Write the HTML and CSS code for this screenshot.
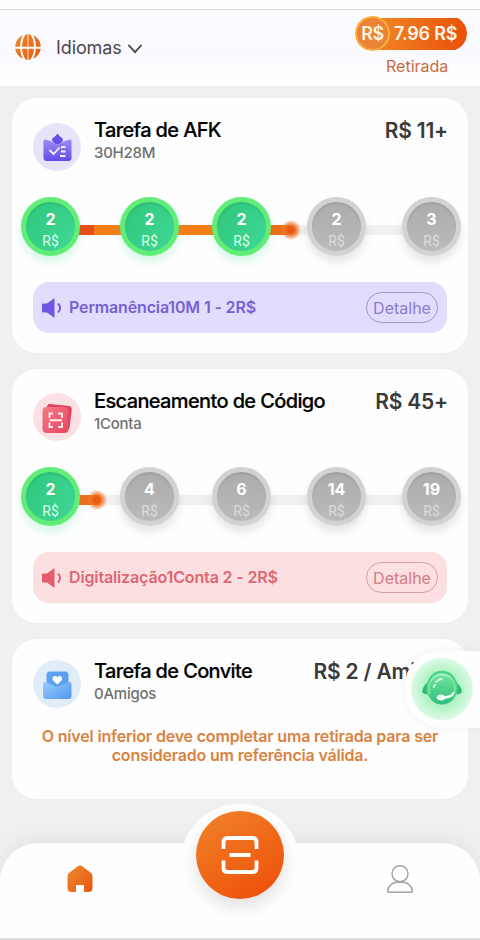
FILE: index.html
```html
<!DOCTYPE html>
<html lang="pt-BR">

<head>
    <meta charset="UTF-8">
    <meta name="viewport" content="width=device-width, initial-scale=1.0">
    <title>Tarefas</title>
    <link rel="stylesheet" href="styles.css">
</head>

<body>
    <header class="header">
        <div class="language">
            <svg class="globe" viewBox="0 0 26 26">
                <defs>
                    <linearGradient id="orange" x1="0" y1="0" x2="1" y2="1">
                        <stop offset="0" stop-color="#ed8a2b" />
                        <stop offset="1" stop-color="#e85713" />
                    </linearGradient>
                </defs>
                <circle cx="13" cy="13" r="12.8" fill="url(#orange)" />
                <path d="M9.800 0C4.800 7 4.800 19 9.800 26M16.200 0c5 7 5 19 0 26M0 13.700h26" fill="none" stroke="#fff" stroke-width="1.900" />
                <path d="M13 0v26" stroke="#fbe3cf" stroke-width="1" />
            </svg>
            <span>Idiomas</span>
            <svg class="chevron" viewBox="0 0 14 10">
                <path d="M1 1.500l6 6.700 6-6.700" fill="none" stroke="#454148" stroke-width="1.800" stroke-linecap="round" />
            </svg>
        </div>
        <div class="wallet">
            <div class="balance">
                <span class="balance-coin">R$</span>
                <span class="balance-value">7.96 R$</span>
            </div>
            <a class="withdraw">Retirada</a>
        </div>
    </header>

    <main class="content">
        <!-- AFK task -->
        <section class="card card-afk">
            <div class="card-head">
                <svg class="card-icon" viewBox="0 0 48 48">
                    <defs>
                        <linearGradient id="purple" x1="0" y1="0" x2="0" y2="1">
                            <stop offset="0" stop-color="#9a8df5" />
                            <stop offset="1" stop-color="#6549e8" />
                        </linearGradient>
                    </defs>
                    <circle cx="24" cy="24" r="24" fill="#e7e3f9" />
                    <path d="M10.500 18q0-2 2-1.500l6 2q2.500 3 6 3t6-3l6-2q2-.5 2 1.500v17q0 3-3 3h-22q-3 0-3-3z" fill="url(#purple)" />
                    <path d="M24.500 10.500q1.500 2.500 4.500 4.500 2 1.500 0 4-2 2.500-4.500 2.500t-4.500-2.500q-2-2.500 0-4 3-2 4.500-4.500z" fill="#6650e5" />
                    <path d="M16.500 27l4 4 6-6.500M28 24h4.500M28 28.500h4.500M27 33h5.500" fill="none" stroke="#f3f0ff" stroke-width="1.800" />
                </svg>
                <div class="card-title">
                    <h2>Tarefa de AFK</h2>
                    <p>30H28M</p>
                </div>
                <div class="reward">R$ 11+</div>
            </div>
            <div class="steps">
                <div class="coin done"><b>2</b><span>R$</span></div>
                <i class="line full first"></i>
                <div class="coin done"><b>2</b><span>R$</span></div>
                <i class="line full"></i>
                <div class="coin done"><b>2</b><span>R$</span></div>
                <i class="line partial"></i>
                <div class="coin"><b>2</b><span>R$</span></div>
                <i class="line"></i>
                <div class="coin"><b>3</b><span>R$</span></div>
            </div>
            <div class="notice">
                <svg class="speaker" viewBox="0 0 22 22">
                    <path d="M0 7.500q0-1 1-1h4L12.500 1v20L5 15.500H1q-1 0-1-1z" fill="currentColor" />
                    <path d="M16 6.500q4.200 4.500 0 9" fill="none" stroke="currentColor" stroke-width="1.900" />
                </svg>
                <span class="notice-text">Permanência10M 1 - 2R$</span>
                <button class="detail">Detalhe</button>
            </div>
        </section>

        <!-- QR scan task -->
        <section class="card card-scan">
            <div class="card-head">
                <svg class="card-icon" viewBox="0 0 48 48">
                    <defs>
                        <linearGradient id="red" x1="0" y1="0" x2="1" y2="1">
                            <stop offset="0" stop-color="#f27a88" />
                            <stop offset="1" stop-color="#e84660" />
                        </linearGradient>
                    </defs>
                    <circle cx="24" cy="24" r="24" fill="#fbe1e3" />
                    <path d="M17 11l19 2q3 .5 2.700 3.500l-2 17q-.5 4-4 4l-19-22q.3-5 3.300-4.500z" fill="#df3f59" />
                    <rect x="9.500" y="14" width="26" height="26" rx="4" fill="url(#red)" />
                    <path d="M20 20.500h-3.500v4.500M25 20.500h4v4.500M20 34h-3.500v-4.500M25 34h4v-4.500M16.500 27.300h12.500" fill="none" stroke="#ffe9ea" stroke-width="1.900" />
                </svg>
                <div class="card-title">
                    <h2>Escaneamento de Código</h2>
                    <p>1Conta</p>
                </div>
                <div class="reward">R$ 45+</div>
            </div>
            <div class="steps">
                <div class="coin done"><b>2</b><span>R$</span></div>
                <i class="line partial"></i>
                <div class="coin"><b>4</b><span>R$</span></div>
                <i class="line"></i>
                <div class="coin"><b>6</b><span>R$</span></div>
                <i class="line"></i>
                <div class="coin"><b>14</b><span>R$</span></div>
                <i class="line"></i>
                <div class="coin"><b>19</b><span>R$</span></div>
            </div>
            <div class="notice">
                <svg class="speaker" viewBox="0 0 22 22">
                    <path d="M0 7.500q0-1 1-1h4L12.500 1v20L5 15.500H1q-1 0-1-1z" fill="currentColor" />
                    <path d="M16 6.500q4.200 4.500 0 9" fill="none" stroke="currentColor" stroke-width="1.900" />
                </svg>
                <span class="notice-text">Digitalização1Conta 2 - 2R$</span>
                <button class="detail">Detalhe</button>
            </div>
        </section>

        <!-- Invite task -->
        <section class="card card-invite">
            <div class="card-head">
                <svg class="card-icon" viewBox="0 0 48 48">
                    <defs>
                        <linearGradient id="blue" x1="0" y1="0" x2="1" y2="1">
                            <stop offset="0" stop-color="#9acbfb" />
                            <stop offset="1" stop-color="#4f98ee" />
                        </linearGradient>
                    </defs>
                    <circle cx="24" cy="24" r="24" fill="#e0ecf8" />
                    <rect x="13.500" y="11.500" width="22" height="24" rx="3.500" fill="#5aa2ef" />
                    <path d="M10 24q0-2.500 2.500-2l7 3q4.500 3 9.500 0l7-3q2.500-.5 2.500 2v12q0 3-3 3H13q-3 0-3-3z" fill="url(#blue)" />
                    <path d="M24.300 24.500l-4-3.800c-2.600-3.200 1.800-6.500 4-3.400 2.200-3.100 6.600.2 4 3.400z" fill="#fff" />
                </svg>
                <div class="card-title">
                    <h2>Tarefa de Convite</h2>
                    <p>0Amigos</p>
                </div>
                <div class="reward">R$ 2 / Amigo</div>
            </div>
            <p class="invite-note">O nível inferior deve completar uma retirada para ser considerado um referência válida.</p>
        </section>
    </main>

    <nav class="tabbar">
        <a class="tab">
            <svg class="tab-icon" viewBox="0 0 26 28">
                <path d="M10.800 1.300q2.200-1.600 4.400 0l8.300 6.200q2 1.500 2 4V23q0 4-4 4h-3.500q-1 0-1-1v-5q0-1-1-1H10q-1 0-1 1v5q0 1-1 1H4.500q-4 0-4-4V11.500q0-2.500 2-4z" fill="url(#orange)" />
            </svg>
        </a>
        <a class="tab">
            <svg class="tab-icon" viewBox="0 0 26 28">
                <path d="M1.500 27.300q-1 0-.8-1.300C1.500 20.500 6 17 13 17s11.500 3.500 12.300 9q.2 1.300-.8 1.300z" fill="none" stroke="#a5a5a5" stroke-width="1.500" />
                <circle cx="13" cy="8.700" r="8" fill="#fff" stroke="#a5a5a5" stroke-width="1.500" />
            </svg>
        </a>
        <div class="scan-halo"></div>
        <button class="scan">
            <svg viewBox="0 0 38 38">
                <path d="M2.500 13V6q0-4 4-4h25q4 0 4 4v7M2.500 24.500V32q0 4 4 4h25q4 0 4-4v-7.500M8.500 19h21" fill="none" stroke="#fff" stroke-width="3.800" />
            </svg>
        </button>
    </nav>

    <!-- Floating support button -->
    <div class="support">
        <svg viewBox="0 0 62 62">
            <defs>
                <radialGradient id="glow">
                    <stop offset="0" stop-color="#8aeaa8" />
                    <stop offset=".6" stop-color="#b5f3c7" />
                    <stop offset="1" stop-color="#ddfae5" />
                </radialGradient>
                <linearGradient id="green" x1="0" y1="0" x2="0" y2="1">
                    <stop offset="0" stop-color="#6fe39b" />
                    <stop offset="1" stop-color="#2fbd7d" />
                </linearGradient>
            </defs>
            <circle cx="31" cy="31" r="31" fill="url(#glow)" />
            <path d="M16 25q-4 3-5 9 2 3 7 2zM46 25q4 3 5 9-2 3-7 2z" fill="#2dbb75" />
            <circle cx="31" cy="32" r="14.500" fill="url(#green)" />
            <path d="M17.500 36c-3-11 3-22 13.500-22s17 11 13.500 22" fill="none" stroke="#4bd486" stroke-width="2.500" />
            <path d="M18.500 36c-2.500-10 2.500-19.500 12.500-19.500S46 26 43.500 34" fill="none" stroke="#a5f2bd" stroke-width="1" />
            <path d="M42.500 35q-2 4.500-11 4.500" fill="none" stroke="#effff3" stroke-width="2.400" stroke-linecap="round" />
            <ellipse cx="30" cy="39.500" rx="4.200" ry="3" fill="#effff3" />
            <path d="M25 24q3-3 6-3M23 29q0-1.500 1-2.500" fill="none" stroke="#c6f8d3" stroke-width="2" stroke-linecap="round" />
        </svg>
    </div>
</body>

</html>
```
FILE: styles.css
```css
* {
    box-sizing: border-box;
}

body {
    margin: 0;
    width: 480px;
    height: 940px;
    position: relative;
    display: flex;
    flex-direction: column;
    overflow: hidden;
    font-family: Inter, sans-serif;
    background: #f0f0f0;
    border-top: 9px solid #fdfdfd;
}

h2,
p {
    margin: 0;
}

button {
    font-family: inherit;
    padding: 0;
    cursor: pointer;
}

/* Header */
.header {
    height: 77px;
    flex: none;
    display: flex;
    justify-content: space-between;
    padding: 6px 13px 0 15px;
    border-top: 1px solid #dedede;
    background: linear-gradient(#fcfcff, #f9f9fe 55%, #fdfdff 80%, #fff);
}

.language {
    display: flex;
    align-items: center;
    height: 62px;
    font-size: 18px;
    letter-spacing: -0.1px;
    color: #4b474d;
}

.globe {
    width: 26px;
    height: 26px;
    margin-right: 15px;
}

.chevron {
    width: 14px;
    height: 10px;
    margin: 3px 0 0 6px;
}

.balance {
    display: flex;
    align-items: center;
    width: 112px;
    height: 35px;
    background: linear-gradient(100deg, #ef7f21 30%, #e94f08) right center / 110px 32px no-repeat;
    border-radius: 18px;
    clip-path: inset(0 round 17px);
}

.balance-coin {
    width: 35px;
    height: 35px;
    line-height: 32px;
    text-align: center;
    border: 2px solid #f8b23c;
    border-radius: 50%;
    background: #ec8236;
    color: #fff3df;
    font-size: 18px;
    font-weight: 600;
    letter-spacing: -0.5px;
}

.balance-value {
    margin-left: 4px;
    color: #fff6e8;
    font-size: 18px;
    font-weight: 600;
    letter-spacing: -0.2px;
    white-space: nowrap;
}

.withdraw {
    display: block;
    margin: 5px 0 0 31px;
    font-size: 16px;
    line-height: 20px;
    color: #c96a3e;
}

/* Cards */
.content {
    flex: 1;
    padding: 12px 12px 0;
}

.card {
    height: 255px;
    margin-bottom: 16px;
    padding-top: 19px;
    background: #fefefe;
    border-radius: 25px;
}

.card-scan {
    height: 254px;
}

.card-invite {
    height: 160px;
    margin: 0;
}

.card-head {
    display: flex;
    align-items: flex-start;
    height: 60px;
    padding: 0 20px 0 21px;
}

.card-icon {
    width: 48px;
    height: 48px;
    margin-top: 6px;
}

.card-scan .card-icon {
    margin-top: 5px;
}

.card-invite .card-icon {
    margin-top: 2px;
}

.card-title {
    flex: 1;
    margin-left: 13px;
    white-space: nowrap;
}

.card-title h2 {
    font-size: 20px;
    line-height: 26px;
    font-weight: 500;
    letter-spacing: -0.63px;
    color: #000;
    -webkit-text-stroke: 0.2px #000;
}

.card-title p {
    font-size: 15px;
    line-height: 20px;
    font-weight: 500;
    letter-spacing: -0.25px;
    color: #707070;
}

.reward {
    font-size: 21px;
    line-height: 27px;
    font-weight: 600;
    letter-spacing: -0.2px;
    color: #3a3a3a;
    white-space: nowrap;
}

.card-invite .reward {
    margin-right: 7px;
}

/* Progress steps */
.steps {
    display: grid;
    grid-template-columns: 59px 40px 59px 33px 59px 36px 59px 36px 59px;
    align-items: center;
    height: 60px;
    margin: 19px 0 0 9px;
}

.card-scan .steps {
    margin-top: 18px;
}

.coin {
    position: relative;
    z-index: 1;
    display: flex;
    flex-direction: column;
    align-items: center;
    height: 59px;
    padding-top: 8px;
    border: 5px solid #d2d2d2;
    border-radius: 50%;
    background: linear-gradient(#acacac, #bababa);
    box-shadow: 0 6px 8px rgba(0, 0, 0, 0.1), inset 0 2px 2px rgba(0, 0, 0, 0.08);
    color: #fff;
}

.coin b {
    font-size: 16px;
    line-height: 18px;
    font-weight: 700;
}

.coin span {
    margin-top: 5px;
    font-family: Roboto, sans-serif;
    font-size: 14px;
    line-height: 16px;
    color: #dcdcdc;
}

.coin.done {
    border-color: #62ec78;
    background: linear-gradient(120deg, #2fc77c, #40d796);
    box-shadow: 0 6px 8px rgba(60, 215, 140, 0.2), inset 0 2px 2px rgba(0, 100, 50, 0.15);
}

.coin.done span {
    color: #dcffea;
}

.line {
    height: 10px;
    margin: 8px -2px 0;
    background: #f0f0f0;
}

.line.full {
    background: #f67d17;
}

.line.first {
    background: linear-gradient(90deg, #ea4d13 16px, #f67d17 16px);
}

.line.partial {
    display: flex;
    align-items: center;
    background: linear-gradient(90deg, #ef6c17 21px, #f0f0f0 21px);
}

.line.partial::after {
    content: "";
    width: 20px;
    height: 20px;
    flex: none;
    margin-left: 12px;
    border-radius: 50%;
    background: radial-gradient(circle, #e9590e 20%, rgba(240, 120, 50, 0.7) 46%, rgba(250, 150, 100, 0.1) 70%);
}

.card-scan .line.partial::after {
    margin-left: 9px;
}

/* Notice bar */
.notice {
    display: flex;
    align-items: center;
    height: 51px;
    margin: 26px 21px 0;
    padding: 0 9px;
    border-radius: 16px;
    background: #e2ddfd;
    color: #7561d5;
}

.card-scan .notice {
    background: #fbdfe1;
    color: #dd6775;
}

.speaker {
    width: 22px;
    height: 22px;
    color: #7155e3;
}

.card-scan .speaker {
    color: #e55c6c;
}

.notice-text {
    flex: 1;
    margin: 0 0 2px 5px;
    font-size: 16px;
    font-weight: 600;
    letter-spacing: -0.14px;
    white-space: nowrap;
}

.detail {
    width: 72px;
    height: 31px;
    border: 1px solid #a199c9;
    border-radius: 16px;
    background: none;
    color: #8b7cce;
    font-size: 16px;
}

.card-scan .detail {
    border-color: #d99ba3;
    color: #d47b86;
}

.invite-note {
    margin: 9px 20px 0;
    font-size: 16px;
    line-height: 19px;
    font-weight: 600;
    letter-spacing: -0.18px;
    text-align: center;
    color: #d98240;
}

/* Bottom tabs */
.tabbar {
    position: relative;
    flex: none;
    display: flex;
    justify-content: space-between;
    height: 97px;
    padding: 22px 67px 0;
    background: #fefefe;
    border-bottom: 2px solid #dedede;
    border-radius: 38px 38px 0 0;
    box-shadow: 0 -2px 24px rgba(0, 0, 0, 0.07);
}

.tab-icon {
    width: 26px;
    height: 28px;
}

.scan-halo {
    position: absolute;
    left: 180px;
    top: -39px;
    width: 120px;
    height: 120px;
    border-radius: 50%;
    background: #fefefe;
}

.scan {
    position: absolute;
    left: 196px;
    top: -32px;
    width: 88px;
    height: 88px;
    display: flex;
    align-items: center;
    justify-content: center;
    border: 0;
    border-radius: 50%;
    background: linear-gradient(150deg, #f1842a, #ed4c06);
    box-shadow: 0 8px 18px rgba(0, 0, 0, 0.12);
}

.scan svg {
    width: 38px;
    height: 38px;
}

/* Support */
.support {
    position: absolute;
    right: 0;
    top: 642px;
    width: 75px;
    height: 77px;
    padding: 7px 0 0 6px;
    border-radius: 34px 0 0 38px;
    background: #fefefe;
    box-shadow: 0 0 8px rgba(0, 0, 0, 0.06);
}

.support svg {
    width: 62px;
    height: 62px;
}
```
